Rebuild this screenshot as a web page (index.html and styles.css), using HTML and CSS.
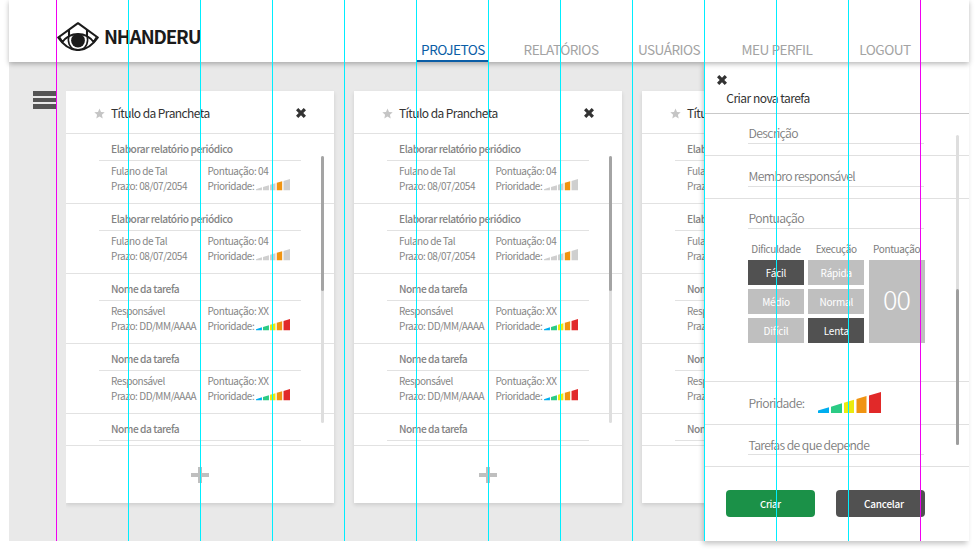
FILE: index.html
```html
<!DOCTYPE html>
<html lang="pt-BR">
<head>
<meta charset="utf-8">
<title>Nhanderu</title>
<link rel="stylesheet" href="styles.css">
</head>
<body>
<svg class="defs" width="0" height="0">
  <symbol id="star" viewBox="0 0 24 24"><path d="M12 1l3.300 7.500 8 .8-6 5.400 1.700 8L12 18.600 5 22.700l1.700-8-6-5.400 8-.8z"/></symbol>
  <symbol id="close" viewBox="0 0 10 10"><path d="M2.300 0 5 2.700 7.700 0 10 2.300 7.300 5 10 7.700 7.700 10 5 7.300 2.300 10 0 7.700 2.700 5 0 2.300z"/></symbol>
  <symbol id="levels" viewBox="0 0 63 21" preserveAspectRatio="none">
    <path class="l1" d="M0 18.500 11 15.200V21H0z"/><path class="l2" d="M13 14.700 24 11.200V21H13z"/><path class="l3" d="M26 10.700 36 7.800V21H26z"/><path class="l4" d="M38.500 7 48.500 4V21H38.500z"/><path class="l5" d="M51 3.500 63 0V21H51z"/>
  </symbol>
</svg>
<div class="app">
  <header class="top">
    <div class="brand">
      <svg class="eye" viewBox="0 0 42 29">
        <g fill="none" stroke="#1b1b1b" stroke-width="2.100" stroke-linejoin="round"><path d="M1.200 15.500 21 1.200 40.800 15.500C35 24 29 28 21 28S7 24 1.200 15.500z"/><path d="M5 20.500C10 13.500 15 12 21 12s11 1.500 16 8.500M12 8v6.500M30 8v6.500M2.500 15.500l2.500 4M39.500 15.500l-2.500 4"/><path d="M12 13.500c-2 7 1 12 5 14M30 13.500c2 7-1 12-5 14" stroke-width="1.600"/></g>
        <circle cx="21" cy="18.500" r="6.900" fill="#1b1b1b"/>
      </svg>
      <span class="name">NHANDERU</span>
    </div>
    <nav class="nav">
      <a class="on"><span>PROJETOS</span></a><a><span>RELATÓRIOS</span></a><a><span>USUÁRIOS</span></a><a><span>MEU PERFIL</span></a><a><span>LOGOUT</span></a>
    </nav>
  </header>
  <div class="main">
    <div class="menu"><i></i><i></i><i></i></div>
    <div class="boards" id="boards"></div>
    <aside class="panel">
      <div class="phead"><svg class="x"><use href="#close"/></svg><h2>Criar nova tarefa</h2></div>
      <div class="pbody">
        <div class="fields">
          <section class="f f1"><div class="field"><span>Descrição</span></div></section>
          <section class="f f2"><div class="field"><span>Membro responsável</span></div></section>
          <section class="f f3"><div class="field"><span>Pontuação</span></div>
            <div class="score">
              <div class="col"><label>Dificuldade</label><b class="sel">Fácil</b><b>Médio</b><b>Difícil</b></div>
              <div class="col"><label>Execução</label><b>Rápida</b><b>Normal</b><b class="sel">Lenta</b></div>
              <div class="col"><label>Pontuação</label><strong>00</strong></div>
            </div>
          </section>
          <section class="f f4"><span>Prioridade:</span><svg class="big"><use href="#levels"/></svg></section>
          <section class="f f5"><div class="field"><span>Tarefas de que depende</span></div></section>
        </div>
        <div class="pscroll"><i></i></div>
      </div>
      <div class="actions"><button class="ok">Criar</button><button class="cancel">Cancelar</button></div>
    </aside>
  </div>
  <div class="guides" id="guides"></div>
</div>
<script src="app.js"></script>
</body>
</html>
```
FILE: styles.css
```css
* { box-sizing: border-box; }
body { margin: 0; background: #fff; font-family: "Noto Sans CJK JP", "Noto Sans", sans-serif; font-weight: 300; width: 977px; height: 550px; overflow: hidden; }
.defs { position: absolute; }
svg { display: block; }
span, label, h2, h3 { white-space: nowrap; }
.app { position: relative; width: 960px; height: 541px; margin-left: 9px; background: #e9e9e9; display: flex; flex-direction: column; }
.top { position: relative; z-index: 3; height: 62px; background: #fff; box-shadow: 0 2px 5px rgba(0,0,0,.28); display: flex; padding-left: 48px; flex: none; }
.brand { display: flex; width: 360px; padding-top: 22px; }
.eye { width: 42px; height: 29px; }
.name { margin-left: 5px; font-weight: 700; font-size: 18.700px; line-height: 28px; color: #1b1b1b; letter-spacing: -1.150px; }
.nav { display: grid; grid-template-columns: 72px 144px 72px 144px 72px; align-items: end; }
.nav a { height: 25px; display: flex; justify-content: center; font-size: 13.600px; line-height: 25px; font-weight: 400; letter-spacing: -.52px; color: #a3a3a3; }
.nav .on { color: #0a5da6; border-bottom: 2px solid #0a5da6; }
.main { display: flex; flex: 1; min-height: 0; }
.menu { width: 57px; padding: 29px 10px 0 24px; display: flex; flex-direction: column; gap: 2px; }
.menu i { height: 4.500px; background: #555; width: 24px; }
.boards { width: 639px; overflow: hidden; display: flex; gap: 20px; padding-top: 29px; flex: none; }
.card { width: 268px; flex: none; height: 412px; background: #fff; box-shadow: 0 2px 4px rgba(0,0,0,.12); display: flex; flex-direction: column; }
.chead { height: 43px; border-bottom: 1px solid #e2e2e2; display: flex; align-items: center; padding: 2px 28.500px 0 28px; }
.star { width: 11px; height: 11px; fill: #c5c5c5; }
.chead h3 { margin: 0 auto 0 6px; font-size: 12px; line-height: 20px; font-weight: 400; letter-spacing: -.57px; color: #333; }
.x { width: 10px; height: 10px; fill: #333; }
.cbody { display: grid; grid-template-columns: 268px; height: 312px; border-bottom: 1px solid #e2e2e2; }
.list, .scroll { grid-area: 1 / 1; }
.list { overflow: hidden; height: 311px; }
.task { height: 70px; border-bottom: 1px solid #e2e2e2; padding: 7px 33px 0; }
.task h4 { margin: 0; height: 20px; padding-left: 12px; font-size: 10.200px; line-height: 15px; font-weight: 500; letter-spacing: -.46px; color: #838383; border-bottom: 1px solid #e2e2e2; white-space: nowrap; }
.rows { display: grid; grid-template-columns: 96.500px 1fr; grid-auto-rows: 15px; padding: 2px 0 0 12px; font-size: 10px; line-height: 15px; font-weight: 400; letter-spacing: -.44px; color: #868686; }
.rows div { display: flex; }
.level-label { width: 48px; letter-spacing: -.48px; }
.lv { width: 34px; height: 11.500px; margin: 1px 0 0; flex: none; }
.scroll { width: 3px; height: 267px; border-radius: 2px; margin: 22px 0 0 255px; background: #dedede; }
.scroll i { display: block; width: 3px; height: 135px; border-radius: 2px; background: #a4a4a4; }
.plus { width: 18px; height: 16px; margin: 21px auto 0; fill: #bfbfbf; }
.l1 { fill: var(--a, #00aeef); } .l2 { fill: var(--b, #2bcb85); } .l3 { fill: var(--c, #ebeb0e); } .l4 { fill: #f09412; } .l5 { fill: var(--e, #e12929); }
.one { --a: #cfcfcf; --b: #cfcfcf; --c: #cfcfcf; --e: #cfcfcf; }
.panel { width: 264px; flex: none; background: #fff; box-shadow: -2px 3px 5px rgba(0,0,0,.22); display: flex; flex-direction: column; }
.phead { height: 52px; border-bottom: 1px solid #c9c9c9; padding: 13px 0 0 11.500px; }
.phead h2 { margin: 3px 0 0 9.800px; font-size: 12px; line-height: 20px; font-weight: 400; letter-spacing: -.52px; color: #333; }
.pbody { display: grid; grid-template-columns: 264px; height: 353px; }
.fields, .pscroll { grid-area: 1 / 1; }
.f { border-bottom: 1px solid #e0e0e0; padding: 0 45px 0 43px; font-size: 12.200px; font-weight: 350; letter-spacing: -.6px; color: #7c7c7c; }
.f1 { height: 42px; padding-top: 10px; } .f2 { height: 43px; padding-top: 11px; } .f3 { height: 183px; padding-top: 10px; }
.field { height: 20px; line-height: 19px; border-bottom: 1px solid #e0e0e0; }
.field span, .f4 span { padding-left: .5px; }
.score { display: grid; grid-template-columns: 56px 56px 56px; gap: 4.300px; margin-top: 12px; }
.col { display: flex; flex-direction: column; gap: 4px; }
.col label { height: 15.400px; line-height: 16px; text-align: center; font-size: 10px; font-weight: 400; letter-spacing: -.36px; }
.col b { height: 25px; background: #bfbfbf; color: #fff; font-size: 10px; line-height: 25px; font-weight: 400; letter-spacing: -.2px; text-align: center; }
.col .sel { background: #515151; }
.col strong { height: 83px; background: #bfbfbf; color: #fff; font-size: 27px; line-height: 78px; font-weight: 300; letter-spacing: -.8px; text-align: center; }
.f4 { height: 43px; line-height: 43px; display: flex; }
.f4 span { width: 70px; }
.big { width: 63px; height: 21px; margin-top: 10px; }
.f5 { height: 42px; padding-top: 10px; }
.f5 .field { line-height: 21px; }
.pscroll { width: 3px; height: 310px; margin: 21px 0 0 251px; padding-top: 154px; border-radius: 2px; background: #dedede; }
.pscroll i { display: block; height: 156px; border-radius: 2px; background: #9e9e9e; }
.actions { display: flex; gap: 21px; padding: 23px 0 0 21px; }
.actions button { width: 89px; height: 27px; padding: 0; border: 0; border-radius: 4px; color: #fff; font: 500 10px/25px "Noto Sans CJK JP", sans-serif; letter-spacing: -.25px; }
.actions .ok { background: #1b9148; font-size: 9.500px; padding-top: 1px; } .actions .cancel { background: #515151; padding: 0 0 1px 7px; }
.guides { position: absolute; z-index: 5; top: 0; left: 47px; display: flex; gap: 71px; height: 541px; }
.guides i { width: 1px; background: #00eeff; }
.guides i:first-child, .guides i:last-child { background: #f000f0; }
```
FILE: app.js
```js
const tasks = [
  ['Elaborar relatório periódico', 'Fulano de Tal', '08/07/2054', '04', 'one'],
  ['Elaborar relatório periódico', 'Fulano de Tal', '08/07/2054', '04', 'one'],
  ['Nome da tarefa', 'Responsável', 'DD/MM/AAAA', 'XX', ''],
  ['Nome da tarefa', 'Responsável', 'DD/MM/AAAA', 'XX', ''],
  ['Nome da tarefa']
];
const task = ([name, who, due, points, level]) => `<div class="task"><h4>${name}</h4>` + (who ? `<div class="rows">
  <div><span>${who}</span></div><div><span>Pontuação: ${points}</span></div>
  <div><span>Prazo: ${due}</span></div><div><span class="level-label">Prioridade:</span><svg class="lv ${level}"><use href="#levels"/></svg></div></div>` : '') + '</div>';
const card = `<article class="card">
  <div class="chead"><svg class="star"><use href="#star"/></svg><h3>Título da Prancheta</h3><svg class="x"><use href="#close"/></svg></div>
  <div class="cbody"><div class="list">${tasks.map(task).join('')}</div><div class="scroll"><i></i></div></div>
  <svg class="plus" viewBox="0 0 18 16"><path d="M7 0h4v6h7v4h-7v6H7v-6H0V6h7z"/></svg>
</article>`;
document.getElementById('boards').innerHTML = card.repeat(3);
document.getElementById('guides').innerHTML = '<i></i>'.repeat(13);
```
